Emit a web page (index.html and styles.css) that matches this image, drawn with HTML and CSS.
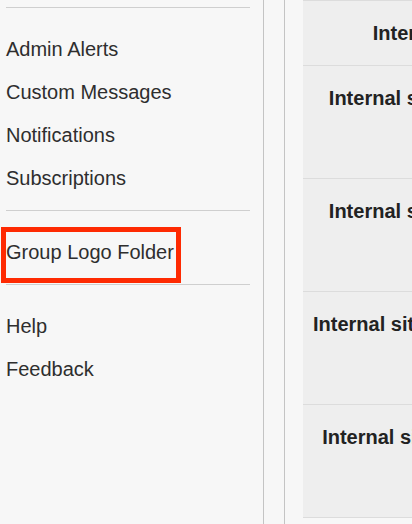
FILE: index.html
```html
<!DOCTYPE html>
<html lang="en">
<head>
<meta charset="utf-8">
<title>Settings</title>
<link rel="stylesheet" href="styles.css">
</head>
<body>
<div class="layout">
  <nav class="sidebar">
    <hr class="divider divider-top">
    <ul class="menu">
      <li><a href="#">Admin Alerts</a></li>
      <li><a href="#">Custom Messages</a></li>
      <li><a href="#">Notifications</a></li>
      <li><a href="#">Subscriptions</a></li>
    </ul>
    <hr class="divider">
    <ul class="menu">
      <li class="highlighted"><a href="#">Group Logo Folder</a><span class="highlight-box"></span></li>
    </ul>
    <hr class="divider">
    <ul class="menu">
      <li><a href="#">Help</a></li>
      <li><a href="#">Feedback</a></li>
    </ul>
  </nav>
  <div class="gutter"></div>
  <main class="content">
    <table class="sites">
      <colgroup><col class="col-name"><col class="col-rest"></colgroup>
      <thead>
        <tr><th>Internal Site</th><th>Details</th></tr>
      </thead>
      <tbody>
        <tr><td>Internal site resource</td><td></td></tr>
        <tr><td>Internal site resource</td><td></td></tr>
        <tr><td>Internal site applications</td><td></td></tr>
        <tr><td>Internal site repository</td><td></td></tr>
      </tbody>
    </table>
  </main>
</div>
</body>
</html>
```

FILE: styles.css
```css
html, body {
  margin: 0;
  padding: 0;
  height: 100%;
  overflow: hidden;
}

body {
  background: #f7f7f7;
  font-family: "Liberation Sans", Arial, Helvetica, sans-serif;
}

.layout {
  display: flex;
  min-height: 100vh;
  width: 100vw;
  overflow: hidden;
}

.sidebar {
  flex: 0 0 auto;
  width: 244px;
  padding: 0 13px 0 6px;
  border-right: 1px solid #c4c4c4;
}

.divider {
  margin: 0;
  border: 0;
  border-top: 1px solid #cfcfcf;
  height: 0;
}

.divider-top {
  margin-top: 7px;
}

.menu {
  list-style: none;
  margin: 0;
  padding: 20px 0 10px;
}

.menu li {
  padding: 10px 0;
  font-size: 20px;
  line-height: 23px;
}

.menu a {
  color: #2e2e2e;
  text-decoration: none;
}

.highlighted {
  position: relative;
}

.highlight-box {
  position: absolute;
  left: -5px;
  top: -4px;
  width: 170px;
  height: 46px;
  border: 5px solid #fe2a02;
  pointer-events: none;
}

.gutter {
  flex: 0 0 20px;
  border-right: 1px solid #c4c4c4;
}

.content {
  flex: 1 1 auto;
  min-width: 0;
  overflow: hidden;
  padding-left: 18px;
}

.sites {
  table-layout: fixed;
  width: 640px;
  border-collapse: separate;
  border-spacing: 0;
  background: #eeeeee;
  color: #222;
}

.col-name {
  width: 254px;
}

.col-rest {
  width: 386px;
}

.sites th,
.sites td {
  box-sizing: border-box;
  padding: 20px 10px 0;
  font-size: 20px;
  line-height: 24px;
  font-weight: bold;
  text-align: center;
  vertical-align: top;
  white-space: nowrap;
  overflow: hidden;
  border-bottom: 1px solid #dcdcdc;
}

.sites th {
  height: 66px;
  border-top: 1px solid #dcdcdc;
}

.sites td {
  height: 113px;
}
```
